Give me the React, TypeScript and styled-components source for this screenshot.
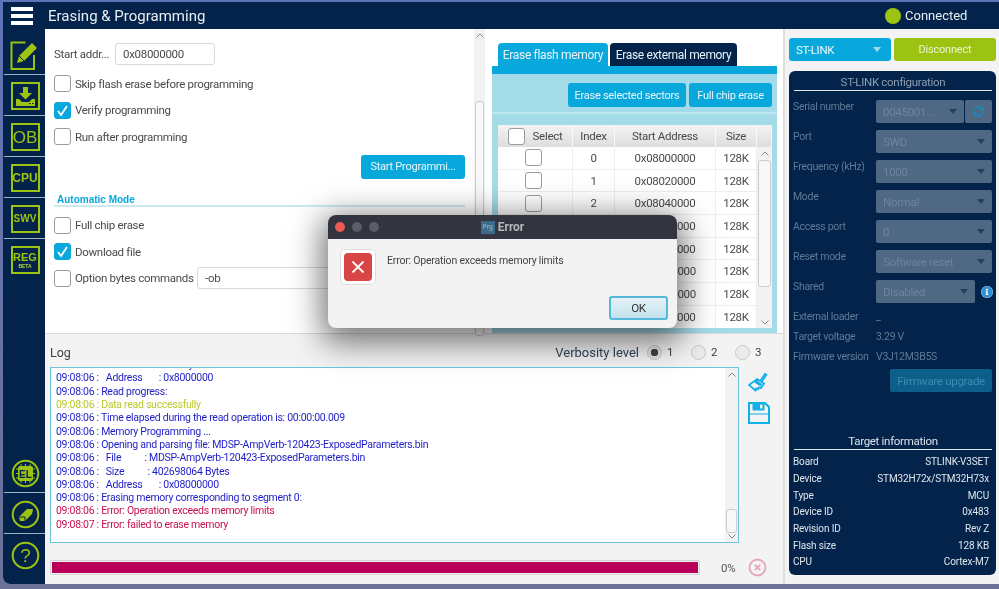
import React from 'react';
import styled, { createGlobalStyle } from 'styled-components';
import { FaInfoCircle, FaSyncAlt } from 'react-icons/fa';

const NAVY = '#03234b';
const LIME = '#9cc212';
const BLUE = '#09a8dc';
const FONT = `Roboto, "Noto Sans", sans-serif`;

const GlobalStyle = createGlobalStyle`
  html, body { margin: 0; padding: 0; }
  body { font-family: ${FONT}; font-size: 11.5px; letter-spacing: -0.3px; color: #444; }
  * { box-sizing: border-box; }
`;

const Page = styled.div`
  position: relative;
  width: 999px;
  height: 589px;
  overflow: hidden;
  background: linear-gradient(#5f74b8, #6c7196);
  padding: 2px 0 5px 3px;
  filter: blur(0.35px);
`;

const Win = styled.div`
  height: 100%;
  display: flex;
  flex-direction: column;
  border-radius: 0 0 0 7px;
  overflow: hidden;
  background: #f3f3f3;
`;

const Header = styled.header`
  height: 27px;
  flex: none;
  background: ${NAVY};
  display: flex;
  align-items: center;
  color: #fff;
  letter-spacing: 0;
`;

const Burger = styled.div`
  width: 22px;
  margin: 0 15px 0 8px;
  display: flex;
  flex-direction: column;
  gap: 3px;
  span { height: 4px; background: #fff; }
`;

const Title = styled.h1`
  margin: 0;
  font-size: 15px;
  font-weight: 400;
  color: #e9eef2;
  flex: 1;
`;

const Status = styled.div`
  width: 114px;
  display: flex;
  align-items: center;
  gap: 4px;
  font-size: 13px;
  color: #e9eef2;
  i { width: 16px; height: 16px; border-radius: 50%; background: ${LIME}; }
`;

const Body = styled.div`
  flex: 1;
  min-height: 0;
  display: flex;
`;

const Sidebar = styled.nav`
  width: 42px;
  flex: none;
  background: ${NAVY};
  display: flex;
  flex-direction: column;
  padding: 5px 0 9px 1px;
  letter-spacing: 0;
`;

const SideItem = styled.div<{ $plain?: boolean }>`
  height: 41px;
  flex: none;
  display: flex;
  justify-content: center;
  align-items: flex-start;
  padding: 7px 0 0 1px;
  border-bottom: ${p => (p.$plain ? 'none' : '1px solid #9fb2c6')};
`;

const SideBox = styled.div<{ $size?: number; $light?: boolean }>`
  width: 29px;
  height: 28px;
  border: 2px solid ${LIME};
  color: ${LIME};
  font-family: "Liberation Sans", sans-serif;
  font-size: ${p => p.$size ?? 12}px;
  font-weight: ${p => (p.$light ? 400 : 700)};
  display: flex;
  flex-direction: column;
  align-items: center;
  justify-content: center;
  line-height: 1;
  small { font-size: 5px; color: #b8d44a; margin-top: 1px; }
`;

const SideFill = styled.div`
  flex: 1;
`;

const Center = styled.main`
  flex: 1;
  min-width: 0;
  display: flex;
  flex-direction: column;
`;

const TopPane = styled.section`
  height: 305px;
  flex: none;
  display: flex;
  background: #fff;
  border-bottom: 1px solid #d8d8d8;
`;

const LeftPane = styled.div`
  width: 429px;
  flex: none;
  padding: 14px 9px 0 9px;
  display: flex;
  flex-direction: column;
  overflow: hidden;
`;

const AddrRow = styled.div`
  display: flex;
  align-items: center;
  gap: 8px;
  margin-bottom: 10px;
`;

const Label = styled.span<{ $w?: number }>`
  ${p => (p.$w ? `width: ${p.$w}px; flex: none;` : '')}
  font-size: 11.5px;
  color: #4a4a4a;
  white-space: nowrap;
`;

const TextInput = styled.div<{ $w: number }>`
  width: ${p => p.$w}px;
  height: 22px;
  border: 1px solid #d9d9d9;
  border-radius: 3px;
  padding: 0 7px;
  display: flex;
  align-items: center;
  font-size: 11.5px;
  color: #4a4a4a;
  background: #fff;
  flex: none;
`;

const CheckRow = styled.div`
  display: flex;
  align-items: center;
  gap: 4px;
  height: 17px;
  margin-bottom: 9.5px;
`;

const Box = styled.span<{ $on?: boolean }>`
  width: 17px;
  height: 17px;
  flex: none;
  border-radius: 3px;
  border: 1px solid ${p => (p.$on ? BLUE : '#9c9c9c')};
  background: ${p => (p.$on ? BLUE : '#fff')};
  display: inline-flex;
  align-items: center;
  justify-content: center;
`;

const Check: React.FC<{ on?: boolean }> = ({ on }) => (
  <Box $on={on}>
    {on && (
      <svg width="13" height="13" viewBox="0 0 13 13">
        <path d="M2 7l3 4 6-9" fill="none" stroke="#fff" strokeWidth="1.8" />
      </svg>
    )}
  </Box>
);

const ActionRow = styled.div`
  display: flex;
  justify-content: flex-end;
`;

const BlueButton = styled.div<{ $w: number }>`
  width: ${p => p.$w}px;
  height: 24px;
  background: ${BLUE};
  color: #e6f6fb;
  border-radius: 3px;
  font-size: 11px;
  letter-spacing: -0.25px;
  display: flex;
  align-items: center;
  justify-content: center;
  flex: none;
`;

const ModeTitle = styled.div`
  margin: 15px 0 10px 0;
  border-bottom: 2px solid #cde9ef;
  color: ${BLUE};
  font-family: "Liberation Sans", sans-serif;
  font-size: 10px;
  font-weight: 700;
  letter-spacing: 0;
  text-indent: 3px;
`;

const ScrollBar = styled.div<{ $w: number; $thumbTop: number; $thumbH: number }>`
  position: relative;
  width: ${p => p.$w}px;
  flex: none;
  background: #f2f2f2;
  &::before {
    content: '';
    position: absolute;
    left: 1px;
    right: 1px;
    top: ${p => p.$thumbTop}px;
    height: ${p => p.$thumbH}px;
    background: #f8f8f8;
    border: 1px solid #ccc;
    border-radius: 3px;
  }
`;

const Arrow = styled.svg<{ $down?: boolean }>`
  position: absolute;
  left: 50%;
  margin-left: -4px;
  ${p => (p.$down ? 'bottom: 3px;' : 'top: 4px;')}
`;

const Bar: React.FC<{ w: number; top: number; h: number; down?: boolean }> = ({ w, top, h, down }) => (
  <ScrollBar $w={w} $thumbTop={top} $thumbH={h}>
    <Arrow width="8" height="5" viewBox="0 0 8 5">
      <path d="M0.5 4.5L4 1l3.5 3.5" fill="none" stroke="#888" />
    </Arrow>
    {down && (
      <Arrow $down width="8" height="5" viewBox="0 0 8 5">
        <path d="M0.5 .5L4 4l3.5-3.5" fill="none" stroke="#888" />
      </Arrow>
    )}
  </ScrollBar>
);

const ErasePane = styled.div`
  flex: 1;
  min-width: 0;
  padding: 14px 6px 0 7px;
  display: flex;
  flex-direction: column;
`;

const Tabs = styled.div`
  display: flex;
  gap: 2px;
  padding-left: 6px;
  height: 23px;
  flex: none;
`;

const Tab = styled.div<{ $active?: boolean; $w: number }>`
  width: ${p => p.$w}px;
  background: ${p => (p.$active ? BLUE : NAVY)};
  color: #e8f4f8;
  border-radius: 4px 4px 0 0;
  font-size: 12px;
  letter-spacing: -0.33px;
  display: flex;
  align-items: center;
  justify-content: center;
`;

const EraseCard = styled.div`
  flex: 1;
  min-height: 0;
  border-top: 8px solid ${BLUE};
  background: #a4dbe9;
  display: flex;
  flex-direction: column;
`;

const EraseActions = styled.div`
  flex: none;
  height: 40px;
  padding-top: 9px;
  padding-right: 5px;
  display: flex;
  justify-content: flex-end;
  gap: 3px;
  border-bottom: 2px solid #bde6ef;
`;

const TableWrap = styled.div`
  flex: 1;
  min-height: 0;
  margin: 11px 5px 5px 6px;
  overflow: hidden;
  display: flex;
  flex-direction: column;
  background: #fff;
`;

const SECTOR_COLS = '75px 42px 101px 41px 15px';

const TableHead = styled.div`
  flex: none;
  display: grid;
  grid-template-columns: ${SECTOR_COLS};
  height: 22px;
  background: linear-gradient(#f3f3f3, #dedede);
  font-size: 11.5px;
  color: #4a4a4a;
  > div {
    display: flex;
    align-items: center;
    justify-content: center;
    border-right: 1px solid #f8f8f8;
    gap: 8px;
  }
`;

const TableBody = styled.div`
  flex: 1;
  min-height: 0;
  display: flex;
`;

const TableRows = styled.div`
  width: 259px;
  flex: none;
`;

const SectorRow = styled.div`
  display: grid;
  grid-template-columns: 75px 42px 101px 41px;
  height: 22.7px;
  border-bottom: 1px solid #eee;
  font-size: 11.5px;
  color: #4a4a4a;
  > div {
    display: flex;
    align-items: center;
    justify-content: center;
    border-right: 1px solid #eee;
  }
  > div:first-child { padding-right: 4px; }
`;

const LogPane = styled.section`
  flex: 1;
  min-height: 0;
  margin-top: 3px;
  padding: 0 0 0 5px;
  display: flex;
  flex-direction: column;
`;

const LogHead = styled.div`
  height: 30px;
  flex: none;
  display: flex;
  align-items: center;
  padding-right: 21px;
  font-size: 12.5px;
  letter-spacing: 0;
  color: #3f3f3f;
  b { font-weight: 400; flex: 1; }
`;

const Radio = styled.span<{ $on?: boolean }>`
  width: 15px;
  height: 15px;
  border-radius: 50%;
  border: 1px solid #c8c8c8;
  background: ${p => (p.$on ? 'radial-gradient(circle, #444 0 3.5px, #e4e4e4 4px)' : '#ebebeb')};
  margin: 0 5px 0 ${p => (p.$on ? 8 : 17)}px;
`;

const Verbosity = styled.span`
  color: #33455c;
  font-size: 13px;
`;

const RadioNum = styled.span`
  width: 7px;
  font-size: 11.5px;
`;

const LogMain = styled.div`
  height: 176px;
  flex: none;
  display: flex;
`;

const LogBox = styled.div`
  width: 689px;
  flex: none;
  border: 1px solid #6cc3db;
  background: #fff;
  display: flex;
`;

const LogLines = styled.div`
  flex: 1;
  min-width: 0;
  overflow: hidden;
  display: flex;
  flex-direction: column;
  justify-content: flex-end;
  padding: 0 0 11px 5px;
`;

const LogLine = styled.div<{ $c?: string }>`
  height: 13.3px;
  line-height: 13.3px;
  flex: none;
  font-size: 10.5px;
  letter-spacing: -0.28px;
  white-space: pre;
  color: ${p => p.$c ?? '#1d1dc9'};
`;

const LogTools = styled.div`
  flex: 1;
  padding: 5px 0 0 9px;
  display: flex;
  flex-direction: column;
  gap: 10px;
  color: #10b0e8;
`;

const ProgressRow = styled.div`
  flex: 1;
  display: flex;
  align-items: center;
  font-size: 11.5px;
  color: #555;
  padding-top: 8px;
`;

const Progress = styled.div`
  width: 650px;
  height: 15px;
  flex: none;
  border: 1px solid #d2d2d2;
  border-radius: 2px;
  padding: 1px;
  background: #f2f2f2;
  margin-right: 21px;
  span { display: block; height: 100%; background: #b80058; }
`;

const CancelIcon = styled.svg`
  margin-left: 13px;
`;

const Aside = styled.aside`
  width: 216px;
  flex: none;
  padding: 9px 3px 9px 4px;
  border-left: 2px solid #dfdfdf;
  display: flex;
  flex-direction: column;
`;

const ConnectRow = styled.div`
  display: flex;
  gap: 3px;
  height: 23px;
  flex: none;
  margin-bottom: 10px;
`;

const ProbeSelect = styled.div`
  width: 102px;
  background: ${BLUE};
  color: #eef9fc;
  border-radius: 3px;
  font-size: 11.5px;
  display: flex;
  align-items: center;
  justify-content: space-between;
  padding: 0 10px 0 7px;
`;

const Disconnect = styled.div`
  flex: 1;
  background: ${LIME};
  color: #eef5cf;
  border-radius: 3px;
  font-size: 11px;
  letter-spacing: -0.2px;
  display: flex;
  align-items: center;
  justify-content: center;
`;

const Caret = styled.i<{ $c?: string }>`
  width: 0;
  height: 0;
  border-left: 4px solid transparent;
  border-right: 4px solid transparent;
  border-top: 5px solid ${p => p.$c ?? '#a9d6e6'};
`;

const ConfigPanel = styled.div`
  flex: 1;
  min-height: 0;
  background: ${NAVY};
  border-radius: 6px;
  padding: 4px 4px 5px 4px;
  display: flex;
  flex-direction: column;
`;

const PanelTitle = styled.div<{ $dim?: boolean }>`
  flex: none;
  text-align: center;
  font-size: 11.5px;
  line-height: 15px;
  margin: 0 0 ${p => (p.$dim ? 9 : 3.5)}px 1px;
  color: ${p => (p.$dim ? '#8c9eb1' : '#d7e0e8')};
  border-bottom: 1px solid #e0e6ec;
`;

const FieldRow = styled.div`
  height: 30px;
  flex: none;
  display: flex;
  align-items: flex-start;
  gap: 1px;
`;

const FieldLabel = styled.span`
  width: 83px;
  margin-right: -1px;
  flex: none;
  font-size: 10.5px;
  line-height: 13px;
  color: #5f7a96;
`;

const FieldSelect = styled.div<{ $w?: number }>`
  width: ${p => p.$w ?? 116}px;
  height: 23px;
  flex: none;
  background: #4f6883;
  border-radius: 2px;
  color: #6d859d;
  font-size: 11.5px;
  display: flex;
  align-items: center;
  justify-content: space-between;
  padding: 0 7px;
`;

const RefreshBtn = styled.div`
  width: 27px;
  height: 23px;
  flex: none;
  background: #4f6883;
  border-radius: 2px;
  display: flex;
  align-items: center;
  justify-content: center;
  color: #1e87b8;
`;

const InfoIcon = styled.span`
  margin: 6px 0 0 5px;
  color: #2f8fd0;
  background: #fff;
  border-radius: 50%;
  width: 12px;
  height: 12px;
  display: flex;
`;

const Values = styled.div`
  margin-top: -4px;
  flex: none;
`;

const ValueRow = styled.div`
  height: 20px;
  display: flex;
  align-items: center;
  font-size: 10.5px;
  color: #5f7a96;
  span:first-child { width: 83px; flex: none; white-space: nowrap; }
`;

const UpgradeRow = styled.div`
  display: flex;
  justify-content: flex-end;
  flex: none;
  margin-top: 3px;
`;

const Upgrade = styled.div`
  width: 102px;
  height: 23px;
  background: #0d5f8b;
  border-radius: 2px;
  color: #3d8bb0;
  font-size: 11.5px;
  display: flex;
  align-items: center;
  justify-content: center;
`;

const TargetBlock = styled.div`
  margin-top: auto;
`;

const InfoList = styled.dl`
  margin: 0;
  display: grid;
  grid-template-columns: auto 1fr;
  grid-auto-rows: 16.65px;
  padding-right: 3px;
  font-size: 10px;
  letter-spacing: -0.15px;
  color: #dfe6ec;
  align-items: center;
  dt { margin: 0; }
  dd { margin: 0; text-align: right; }
`;

const Dialog = styled.div`
  position: absolute;
  left: 328px;
  top: 215px;
  width: 349px;
  height: 113px;
  border-radius: 8px;
  overflow: hidden;
  background: #f3f3f3;
  box-shadow: 0 8px 32px 6px rgba(0, 0, 0, 0.55);
  display: flex;
  flex-direction: column;
`;

const DialogBar = styled.div`
  position: relative;
  height: 24px;
  flex: none;
  background: #32353f;
  display: flex;
  align-items: center;
  justify-content: center;
  gap: 3px;
  color: #b5b8bd;
  font-size: 12px;
  font-weight: 700;
  letter-spacing: 0;
`;

const Lights = styled.div`
  position: absolute;
  left: 7px;
  top: 7px;
  display: flex;
  gap: 7px;
`;

const Light = styled.i<{ $c: string }>`
  width: 10px;
  height: 10px;
  border-radius: 50%;
  background: ${p => p.$c};
`;

const AppBadge = styled.span`
  width: 14px;
  height: 13px;
  background: #3d6a8a;
  color: #7fa6bf;
  font-size: 6.5px;
  display: flex;
  align-items: center;
  justify-content: center;
`;

const DialogBody = styled.div`
  flex: 1;
  padding: 10px 9px 8px 12px;
  display: flex;
  flex-direction: column;
`;

const DialogMsg = styled.div`
  display: flex;
  gap: 11px;
  font-size: 10.5px;
  letter-spacing: -0.2px;
  color: #444;
  span { padding-top: 5px; }
`;

const ErrorIcon = styled.div`
  width: 36px;
  height: 36px;
  flex: none;
  border: 1px solid #ddd;
  border-radius: 5px;
  background: #fff;
  padding: 3px;
  div {
    width: 100%;
    height: 100%;
    background: #d84545;
    border-radius: 4px;
    display: flex;
    align-items: center;
    justify-content: center;
  }
`;

const OkRow = styled.div`
  display: flex;
  justify-content: flex-end;
  margin-top: auto;
`;

const OkButton = styled.div`
  width: 59px;
  height: 24px;
  border: 2px solid #57b9d9;
  border-radius: 3px;
  background: linear-gradient(#e6f2f6, #c3e2ec);
  font-size: 11.5px;
  color: #333;
  display: flex;
  align-items: center;
  justify-content: center;
`;

const Circle: React.FC<{ children?: React.ReactNode }> = ({ children }) => (
  <svg width="29" height="29" viewBox="0 0 29 29">
    <circle cx="14.5" cy="14.5" r="12.8" fill="none" stroke={LIME} strokeWidth="2" />
    {children}
  </svg>
);

const sectors = ['0x08000000', '0x08020000', '0x08040000', '0x08060000', '0x08080000', '0x080A0000', '0x080C0000', '0x080E0000'];

const logLines: { t: string; c?: string }[] = [
  { t: '09:08:06 :   Size          : 32768 Bytes' },
  { t: '09:08:06 :   Address       : 0x8000000' },
  { t: '09:08:06 : Read progress:' },
  { t: '09:08:06 : Data read successfully', c: '#b9c92a' },
  { t: '09:08:06 : Time elapsed during the read operation is: 00:00:00.009' },
  { t: '09:08:06 : Memory Programming ...' },
  { t: '09:08:06 : Opening and parsing file: MDSP-AmpVerb-120423-ExposedParameters.bin' },
  { t: '09:08:06 :   File          : MDSP-AmpVerb-120423-ExposedParameters.bin' },
  { t: '09:08:06 :   Size          : 402698064 Bytes' },
  { t: '09:08:06 :   Address       : 0x08000000' },
  { t: '09:08:06 : Erasing memory corresponding to segment 0:' },
  { t: '09:08:06 : Error: Operation exceeds memory limits', c: '#c8104f' },
  { t: '09:08:07 : Error: failed to erase memory', c: '#c8104f' },
];

const fields = [
  { label: 'Port', value: 'SWD' },
  { label: 'Frequency (kHz)', value: '1000' },
  { label: 'Mode', value: 'Normal' },
  { label: 'Access port', value: '0' },
  { label: 'Reset mode', value: 'Software reset' },
];

const target = [
  ['Board', 'STLINK-V3SET'],
  ['Device', 'STM32H72x/STM32H73x'],
  ['Type', 'MCU'],
  ['Device ID', '0x483'],
  ['Revision ID', 'Rev Z'],
  ['Flash size', '128 KB'],
  ['CPU', 'Cortex-M7'],
];

export default function App() {
  return (
    <Page>
      <GlobalStyle />
      <Win>
        <Header>
          <Burger><span /><span /><span /></Burger>
          <Title>Erasing &amp; Programming</Title>
          <Status><i />Connected</Status>
        </Header>
        <Body>
          <Sidebar>
            <SideItem>
              <svg width="31" height="31" viewBox="0 0 31 31">
                <path d="M24 14v14H1.500V1.500h14" fill="none" stroke={LIME} strokeWidth="2" />
                <path d="M7 22l2-7L22 2l5 5-13 13z" fill={LIME} />
                <path d="M9 15l5 5" stroke={NAVY} strokeWidth="1" />
              </svg>
            </SideItem>
            <SideItem>
              <SideBox>
                <svg width="23" height="23" viewBox="0 0 23 23">
                  <path d="M9 2h5v6h4l-6.500 6.500L5 8h4z" fill={LIME} />
                  <path d="M2 14h3l3 3h7l3-3h3v7H2z" fill={LIME} />
                  <path d="M15 18.500h1.500M18 18.500h1.500" stroke={NAVY} strokeWidth="1.200" />
                </svg>
              </SideBox>
            </SideItem>
            <SideItem><SideBox $size={17} $light>OB</SideBox></SideItem>
            <SideItem><SideBox $size={12}>CPU</SideBox></SideItem>
            <SideItem><SideBox $size={10}>SWV</SideBox></SideItem>
            <SideItem $plain><SideBox $size={11}>REG<small>BETA</small></SideBox></SideItem>
            <SideFill />
            <SideItem>
              <Circle>
                <rect x="7" y="7" width="15" height="15" rx="2" fill={LIME} />
                <path d="M5 10h19M5 14.500h19M5 19h19M10 5v19M14.500 5v19M19 5v19" stroke={LIME} strokeWidth="1" />
                <text x="14.500" y="18.500" fontSize="10" fontWeight="700" textAnchor="middle" fill={NAVY} fontFamily="Liberation Sans">EL</text>
              </Circle>
            </SideItem>
            <SideItem>
              <Circle>
                <path d="M8 17l8-8h6l-1 5-7 7H9z" fill={LIME} />
                <path d="M8 17h6v4" fill="none" stroke={NAVY} strokeWidth="1" />
              </Circle>
            </SideItem>
            <SideItem $plain>
              <Circle>
                <text x="14.500" y="21" fontSize="19" textAnchor="middle" fill={LIME} fontFamily="Liberation Sans">?</text>
              </Circle>
            </SideItem>
          </Sidebar>
          <Center>
            <TopPane>
              <LeftPane>
                <AddrRow>
                  <Label $w={53}>Start addr...</Label>
                  <TextInput $w={100}>0x08000000</TextInput>
                </AddrRow>
                <CheckRow><Check /><Label>Skip flash erase before programming</Label></CheckRow>
                <CheckRow><Check on /><Label>Verify programming</Label></CheckRow>
                <CheckRow><Check /><Label>Run after programming</Label></CheckRow>
                <ActionRow><BlueButton $w={104}>Start Programmi...</BlueButton></ActionRow>
                <ModeTitle>Automatic Mode</ModeTitle>
                <CheckRow><Check /><Label>Full chip erase</Label></CheckRow>
                <CheckRow><Check on /><Label>Download file</Label></CheckRow>
                <CheckRow>
                  <Check /><Label $w={118}>Option bytes commands</Label>
                  <TextInput $w={220}>-ob</TextInput>
                </CheckRow>
              </LeftPane>
              <Bar w={11} top={72} h={233} />
              <ErasePane>
                <Tabs>
                  <Tab $active $w={110}>Erase flash memory</Tab>
                  <Tab $w={127}>Erase external memory</Tab>
                </Tabs>
                <EraseCard>
                  <EraseActions>
                    <BlueButton $w={118}>Erase selected sectors</BlueButton>
                    <BlueButton $w={83}>Full chip erase</BlueButton>
                  </EraseActions>
                  <TableWrap>
                    <TableHead>
                      <div><Check />Select</div>
                      <div>Index</div>
                      <div>Start Address</div>
                      <div>Size</div>
                      <div />
                    </TableHead>
                    <TableBody>
                      <TableRows>
                        {sectors.map((s, i) => (
                          <SectorRow key={s}>
                            <div><Check /></div>
                            <div>{i}</div>
                            <div>{s}</div>
                            <div>128K</div>
                          </SectorRow>
                        ))}
                      </TableRows>
                      <Bar w={15} top={13} h={125} down />
                    </TableBody>
                  </TableWrap>
                </EraseCard>
              </ErasePane>
            </TopPane>
            <LogPane>
              <LogHead>
                <b>Log</b>
                <Verbosity>Verbosity level</Verbosity>
                <Radio $on /><RadioNum>1</RadioNum>
                <Radio /><RadioNum>2</RadioNum>
                <Radio /><RadioNum>3</RadioNum>
              </LogHead>
              <LogMain>
                <LogBox>
                  <LogLines>
                    {logLines.map((l, i) => (
                      <LogLine key={i} $c={l.c}>{l.t}</LogLine>
                    ))}
                  </LogLines>
                  <Bar w={13} top={141} h={22} down />
                </LogBox>
                <LogTools>
                  <svg width="20" height="20" viewBox="0 0 20 20">
                    <path d="M17.500 1l-5 7.500M19 2l-5 7.500" fill="none" stroke="currentColor" strokeWidth="1.600" />
                    <path d="M9 7l7 4.500-3 4.500-2.500-.5-.5 2-2-1-.5 2L1 13z" fill="none" stroke="currentColor" strokeWidth="1.800" />
                    <path d="M8 8l6 4-1.500 2.500L6.500 10.500z" fill="currentColor" />
                  </svg>
                  <svg width="22" height="22" viewBox="0 0 22 22">
                    <path d="M2 1h15l4 4v16H1V1z" fill="none" stroke="currentColor" strokeWidth="2" />
                    <path d="M5 1h11v7H5zM1 12h20" fill="currentColor" stroke="currentColor" strokeWidth="1" />
                    <rect x="12" y="2.500" width="2.500" height="4" fill="#f3f3f3" />
                  </svg>
                </LogTools>
              </LogMain>
              <ProgressRow>
                <Progress><span /></Progress>
                0%
                <CancelIcon width="19" height="19" viewBox="0 0 19 19">
                  <circle cx="9.500" cy="9.500" r="8" fill="none" stroke="#e8a2bd" strokeWidth="1.800" />
                  <path d="M6.800 6.800l5.400 5.400M12.200 6.800l-5.400 5.400" stroke="#e8a2bd" strokeWidth="1.800" />
                </CancelIcon>
              </ProgressRow>
            </LogPane>
          </Center>
          <Aside>
            <ConnectRow>
              <ProbeSelect>ST-LINK<Caret /></ProbeSelect>
              <Disconnect>Disconnect</Disconnect>
            </ConnectRow>
            <ConfigPanel>
              <PanelTitle $dim>ST-LINK configuration</PanelTitle>
              <FieldRow>
                <FieldLabel>Serial number</FieldLabel>
                <FieldSelect $w={88}>0045001...<Caret $c="#223f5f" /></FieldSelect>
                <RefreshBtn><FaSyncAlt size={11} /></RefreshBtn>
              </FieldRow>
              {fields.map(f => (
                <FieldRow key={f.label}>
                  <FieldLabel>{f.label}</FieldLabel>
                  <FieldSelect>{f.value}<Caret $c="#223f5f" /></FieldSelect>
                </FieldRow>
              ))}
              <FieldRow>
                <FieldLabel>Shared</FieldLabel>
                <FieldSelect $w={99}>Disabled<Caret $c="#223f5f" /></FieldSelect>
                <InfoIcon><FaInfoCircle size={12} /></InfoIcon>
              </FieldRow>
              <Values>
                <ValueRow><span>External loader</span><span>_</span></ValueRow>
                <ValueRow><span>Target voltage</span><span>3.29 V</span></ValueRow>
                <ValueRow><span>Firmware version</span><span>V3J12M3B5S</span></ValueRow>
              </Values>
              <UpgradeRow><Upgrade>Firmware upgrade</Upgrade></UpgradeRow>
              <TargetBlock>
                <PanelTitle>Target information</PanelTitle>
                <InfoList>
                  {target.map(([k, v]) => (
                    <React.Fragment key={k}>
                      <dt>{k}</dt>
                      <dd>{v}</dd>
                    </React.Fragment>
                  ))}
                </InfoList>
              </TargetBlock>
            </ConfigPanel>
          </Aside>
        </Body>
      </Win>
      <Dialog>
        <DialogBar>
          <Lights>
            <Light $c="#ec5a55" />
            <Light $c="#5b5e67" />
            <Light $c="#5b5e67" />
          </Lights>
          <AppBadge>Prg</AppBadge>
          Error
        </DialogBar>
        <DialogBody>
          <DialogMsg>
            <ErrorIcon>
              <div>
                <svg width="14" height="14" viewBox="0 0 14 14">
                  <path d="M1.500 1.500l11 11M12.500 1.500l-11 11" stroke="#fff" strokeWidth="1.800" />
                </svg>
              </div>
            </ErrorIcon>
            <span>Error: Operation exceeds memory limits</span>
          </DialogMsg>
          <OkRow><OkButton>OK</OkButton></OkRow>
        </DialogBody>
      </Dialog>
    </Page>
  );
}
